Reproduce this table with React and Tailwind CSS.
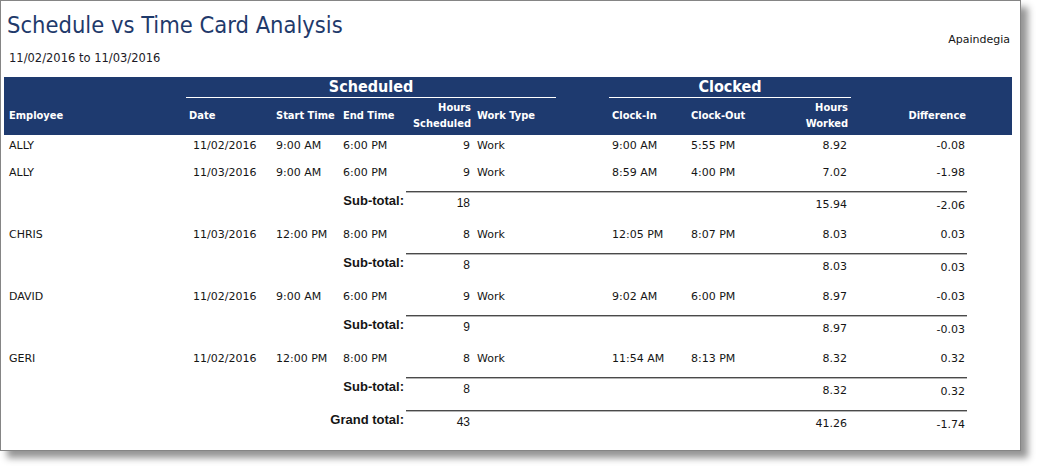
import React from 'react';

const groups = [
  {
    rows: [
      { emp: 'ALLY', date: '11/02/2016', start: '9:00 AM', end: '6:00 PM', hrs: '9', work: 'Work', cin: '9:00 AM', cout: '5:55 PM', worked: '8.92', diff: '-0.08' },
      { emp: 'ALLY', date: '11/03/2016', start: '9:00 AM', end: '6:00 PM', hrs: '9', work: 'Work', cin: '8:59 AM', cout: '4:00 PM', worked: '7.02', diff: '-1.98' },
    ],
    sub: { hrs: '18', worked: '15.94', diff: '-2.06' },
  },
  {
    rows: [
      { emp: 'CHRIS', date: '11/03/2016', start: '12:00 PM', end: '8:00 PM', hrs: '8', work: 'Work', cin: '12:05 PM', cout: '8:07 PM', worked: '8.03', diff: '0.03' },
    ],
    sub: { hrs: '8', worked: '8.03', diff: '0.03' },
  },
  {
    rows: [
      { emp: 'DAVID', date: '11/02/2016', start: '9:00 AM', end: '6:00 PM', hrs: '9', work: 'Work', cin: '9:02 AM', cout: '6:00 PM', worked: '8.97', diff: '-0.03' },
    ],
    sub: { hrs: '9', worked: '8.97', diff: '-0.03' },
  },
  {
    rows: [
      { emp: 'GERI', date: '11/02/2016', start: '12:00 PM', end: '8:00 PM', hrs: '8', work: 'Work', cin: '11:54 AM', cout: '8:13 PM', worked: '8.32', diff: '0.32' },
    ],
    sub: { hrs: '8', worked: '8.32', diff: '0.32' },
  },
];

const DetailRow = ({ r }) => (
  <div className="flex h-[27px] pt-[4px] text-[11px] leading-[14px] text-[#151515]">
    <div className="w-[182px] pl-[5px]">{r.emp}</div>
    <div className="w-[86px] pl-[7px]">{r.date}</div>
    <div className="w-[68px] pl-[4px]">{r.start}</div>
    <div className="w-[66px] pl-[3px]">{r.end}</div>
    <div className="w-[66px] pr-[2px] text-right">{r.hrs}</div>
    <div className="w-[84px] pl-[5px]">{r.work}</div>
    <div className="w-[53px]" />
    <div className="w-[79px] pl-[3px]">{r.cin}</div>
    <div className="w-[72px] pl-[3px]">{r.cout}</div>
    <div className="w-[90px] pr-[3px] text-right">{r.worked}</div>
    <div className="w-[162px] pr-[47px] text-right">{r.diff}</div>
  </div>
);

const TotalRow = ({ label, t, grand }) => (
  <div className={grand ? '' : 'pt-[2px]'}>
    <div className="flex">
      <div className="w-[402px]" />
      <div className="h-[2px] w-[561px] border-t border-b border-t-[#4a4a4a] border-b-[#b4b4b4]" />
    </div>
    <div className="flex h-[31px] text-[#151515]">
      <div className="w-[402px] pr-[2px] text-right font-['Liberation_Sans',Arial,sans-serif] text-[13px] font-bold leading-[16px]">
        {label}
      </div>
      <div className="w-[66px] pr-[2px] pt-[2px] text-right font-['Liberation_Sans',Arial,sans-serif] text-[12px] leading-[16px]">
        {t.hrs}
      </div>
      <div className="w-[288px]" />
      <div className="w-[90px] pr-[3px] pt-[5px] text-right text-[11px] leading-[14px]">{t.worked}</div>
      <div className="w-[162px] pr-[47px] pt-[6px] text-right text-[11px] leading-[14px]">{t.diff}</div>
    </div>
  </div>
);

export default function App() {
  return (
    <div className="h-[467px] w-[1037px] bg-white font-['DejaVu_Sans',Verdana,sans-serif]">
      <div className="h-[451px] w-[1021px] border border-[#858585] bg-white shadow-[7px_7px_7px_rgba(0,0,0,0.42)]">
        <div className="flex justify-between pt-[10px]">
          <div className="pl-[6px]">
            <h1 className="font-['DejaVu_Sans_Condensed','DejaVu_Sans',sans-serif] text-[23.5px] leading-[28px] text-[#1f3a6b] [font-stretch:condensed]">
              Schedule vs Time Card Analysis
            </h1>
            <div className="mt-[12px] pl-[2px] text-[11.5px] leading-[14px] text-[#1c1a26]">
              11/02/2016 to 11/03/2016
            </div>
          </div>
          <div className="pr-[10px] pt-[22px] text-[11px] leading-[14px] text-[#151515]">Apaindegia</div>
        </div>

        <div className="ml-[3px] mt-[12px] w-[1008px]">
          <div className="h-[58px] bg-[#1e3a6f] font-['DejaVu_Sans_Condensed','DejaVu_Sans',sans-serif] font-bold text-white [font-stretch:condensed]">
            <div className="flex h-[21px]">
              <div className="w-[182px]" />
              <div className="w-[370px] border-b border-white pt-[1px] text-center text-[16px] leading-[18px]">Scheduled</div>
              <div className="w-[53px]" />
              <div className="w-[242px] border-b border-white pt-[1px] text-center text-[16px] leading-[18px]">Clocked</div>
            </div>
            <div className="flex h-[37px] items-center pb-[2px] text-[11px] leading-[16px]">
              <div className="w-[182px] pl-[5px]">Employee</div>
              <div className="w-[86px] pl-[3px]">Date</div>
              <div className="w-[68px] pl-[4px]">Start Time</div>
              <div className="w-[66px] pl-[3px]">End Time</div>
              <div className="w-[66px] pr-[1px] text-right">
                Hours
                <br />
                Scheduled
              </div>
              <div className="w-[84px] pl-[5px]">Work Type</div>
              <div className="w-[53px]" />
              <div className="w-[79px] pl-[3px]">Clock-In</div>
              <div className="w-[72px] pl-[3px]">Clock-Out</div>
              <div className="w-[90px] pr-[2px] text-right">
                Hours
                <br />
                Worked
              </div>
              <div className="w-[162px] pr-[46px] text-right">Difference</div>
            </div>
          </div>

          {groups.map((g, i) => (
            <div key={i}>
              {g.rows.map((r, j) => (
                <DetailRow key={j} r={r} />
              ))}
              <TotalRow label="Sub-total:" t={g.sub} />
            </div>
          ))}
          <TotalRow grand label="Grand total:" t={{ hrs: '43', worked: '41.26', diff: '-1.74' }} />
        </div>
      </div>
    </div>
  );
}
